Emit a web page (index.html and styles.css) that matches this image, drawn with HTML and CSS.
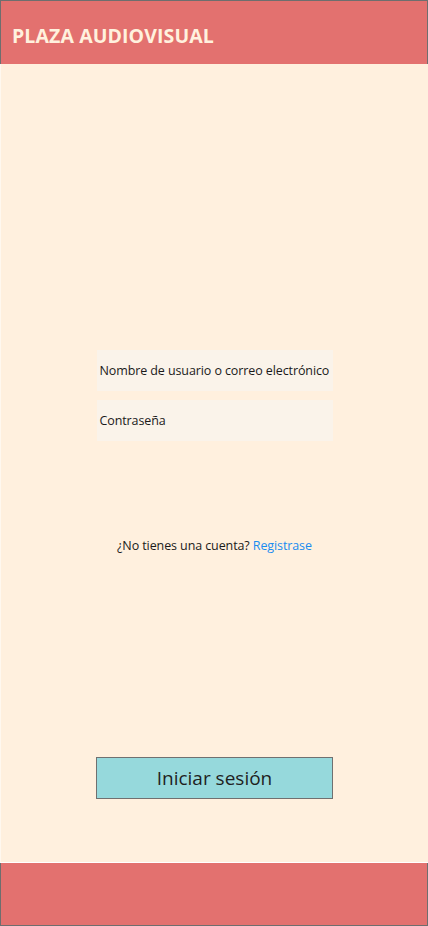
FILE: index.html
```html
<!DOCTYPE html>
<html lang="es">
<head>
<meta charset="utf-8">
<title>Plaza Audiovisual</title>
<link rel="stylesheet" href="styles.css">
</head>
<body>
<div class="app">
  <header class="topbar">
    <h1 class="brand">PLAZA AUDIOVISUAL</h1>
  </header>
  <main class="content">
    <div class="fields">
      <div class="field">Nombre de usuario o correo electrónico</div>
      <div class="field">Contraseña</div>
    </div>
    <p class="signup">¿No tienes una cuenta? <a class="link" href="#">Registrase</a></p>
    <button class="login" type="button">Iniciar sesión</button>
  </main>
  <footer class="bottombar"></footer>
</div>
</body>
</html>
```
FILE: styles.css
```css
* { box-sizing: border-box; }
html, body { margin: 0; padding: 0; }
body {
  font-family: "Open Sans", "Noto Sans", sans-serif;
  background: #fff0de;
}
.app {
  width: 428px;
  height: 926px;
  display: flex;
  flex-direction: column;
}
.topbar {
  height: 64px;
  background: #e3716f;
  border: 1px solid #6e6e6e;
  border-bottom: none;
  display: flex;
  align-items: center;
  padding: 0 0 0 11px;
}
.brand {
  margin: 0;
  font-size: 19.5px;
  font-weight: 700;
  color: #fff1de;
  letter-spacing: 0.1px;
  padding-top: 6px;
}
.content {
  flex: 1;
  display: flex;
  flex-direction: column;
  align-items: center;
  border-left: 1px solid #fff8ef;
  border-bottom: 1px solid #ffffff;
}
.fields {
  margin-top: 286px;
  display: flex;
  flex-direction: column;
  gap: 9px;
}
.field {
  width: 236px;
  height: 41px;
  background: #faf3ea;
  display: flex;
  align-items: center;
  padding-left: 3px;
  font-size: 12.5px;
  color: #1a1a1a;
  white-space: nowrap;
  letter-spacing: -0.1px;
}
.signup {
  margin: 96px 0 0;
  font-size: 12.5px;
  color: #1a1a1a;
  letter-spacing: -0.1px;
}
.link {
  color: #1a8cf0;
  text-decoration: none;
}
.login {
  margin-top: 203px;
  width: 237px;
  height: 42px;
  background: #96d9dc;
  border: 1px solid #707070;
  font-family: "Open Sans", "Noto Sans", sans-serif;
  font-size: 19px;
  color: #1f1f1f;
  padding: 0;
}
.bottombar {
  height: 63px;
  background: #e3716f;
  border: 1px solid #6e6e6e;
  border-top: none;
}
```
